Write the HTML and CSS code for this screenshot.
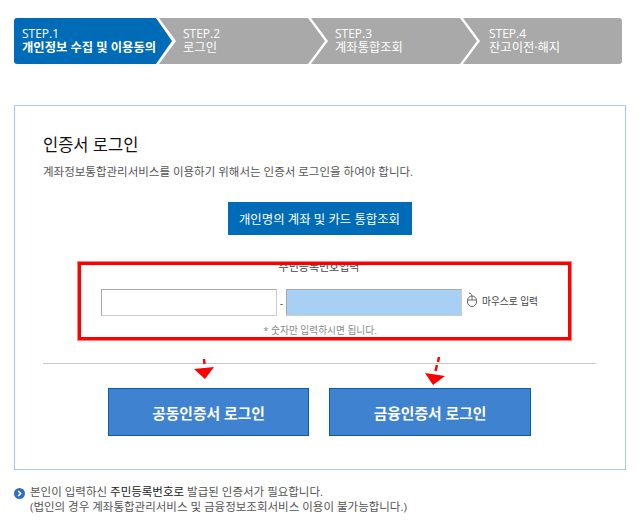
FILE: index.html
```html
<!DOCTYPE html>
<html lang="ko">
<head>
  <meta charset="UTF-8">
  <title>인증서 로그인</title>
  <link rel="stylesheet" href="styles.css">
</head>
<body>

  <ol class="steps">
    <li class="step step-first active"><span class="step-no">STEP.1</span><span class="step-name">개인정보 수집 및 이용동의</span></li>
    <li class="step"><span class="step-no">STEP.2</span><span class="step-name">로그인</span></li>
    <li class="step"><span class="step-no">STEP.3</span><span class="step-name">계좌통합조회</span></li>
    <li class="step step-last"><span class="step-no">STEP.4</span><span class="step-name">잔고이전·해지</span></li>
  </ol>

  <div class="card">
    <h2 class="card-title">인증서 로그인</h2>
    <p class="card-desc">계좌정보통합관리서비스를 이용하기 위해서는 인증서 로그인을 하여야 합니다.</p>

    <div class="lookup-row">
      <button class="lookup-btn">개인명의 계좌 및 카드 통합조회</button>
    </div>

    <div class="id-form">
      <div class="id-label">주민등록번호입력</div>
      <div class="id-row">
        <input type="text" class="id-input">
        <span class="id-dash">-</span>
        <input type="text" class="id-input id-input-on">
        <svg class="mouse-icon" width="12" height="16" viewBox="0 0 12 16">
          <path d="M6 4 C5.5 2 4.5 1 3 1" fill="none" stroke="#666" stroke-width="1"/>
          <rect x="1.5" y="4" width="9" height="10.5" rx="4.5" fill="none" stroke="#666" stroke-width="1"/>
          <path d="M1.5 8 H10.5 M6 4 V8" fill="none" stroke="#666" stroke-width="1"/>
        </svg>
        <span class="mouse-text">마우스로 입력</span>
      </div>
      <div class="id-hint">* 숫자만 입력하시면 됩니다.</div>
    </div>

    <hr class="divider">

    <div class="login-row">
      <button class="login-btn">공동인증서 로그인</button>
      <button class="login-btn">금융인증서 로그인</button>
    </div>

    <!-- red marks drawn on top of the capture -->
    <div class="red-box"></div>
    <svg class="red-arrow arrow-a" width="24" height="24" viewBox="0 0 24 24">
      <path d="M12 0 L12.5 5" stroke="#f00" stroke-width="2.5" fill="none"/>
      <path d="M2 10 L22 8 L13 20 Z" fill="#f00"/>
    </svg>
    <svg class="red-arrow arrow-b" width="24" height="30" viewBox="0 0 24 30">
      <path d="M15 0 L14 5 M13 8 L11.5 14" stroke="#f00" stroke-width="2.5" fill="none"/>
      <path d="M1 16 L21 19 L9 28 Z" fill="#f00"/>
    </svg>
  </div>

  <div class="note">
    <svg class="note-icon" width="11" height="11" viewBox="0 0 11 11">
      <circle cx="5.5" cy="5.5" r="5.5" fill="#2f6fc0"/>
      <path d="M4.2 3 L6.7 5.5 L4.2 8" fill="none" stroke="#fff" stroke-width="1.5"/>
    </svg>
    <p class="note-text">본인이 입력하신 <b>주민등록번호로</b> 발급된 인증서가 필요합니다.<br>(법인의 경우 계좌통합관리서비스 및 금융정보조회서비스 이용이 불가능합니다.)</p>
  </div>

</body>
</html>
```

FILE: styles.css
```css
* {
  box-sizing: border-box;
}

body {
  margin: 0;
  padding: 18px 18px 0 14px;
  width: 644px;
  height: 522px;
  overflow: hidden;
  background: #fff;
  color: #333;
  font-family: "Open Sans", "Noto Sans CJK KR", sans-serif;
  font-size: 11px;
}

/* step bar */
.steps {
  list-style: none;
  margin: 0;
  padding: 0;
  display: flex;
  height: 46px;
}

.step {
  flex: none;
  width: 169px;
  margin-right: -17px;
  padding: 9px 0 0 24px;
  background: #a9a9a9;
  color: #fff;
  font-size: 12px;
  line-height: 14px;
  display: flex;
  flex-direction: column;
  align-items: flex-start;
  clip-path: polygon(0 0, 149px 0, 166px 50%, 149px 100%, 0 100%, 17px 50%);
}

.step-first {
  width: 158px;
  margin-right: -13px;
  padding-left: 8px;
  border-radius: 3px 0 0 3px;
  clip-path: polygon(0 0, 142px 0, 158px 50%, 142px 100%, 0 100%);
}

.step-last {
  width: 159px;
  margin-right: 0;
  padding-left: 26px;
  clip-path: polygon(0 0, 100% 0, 100% 100%, 0 100%, 17px 50%);
  border-radius: 0 3px 3px 0;
}

.step-name {
  font-size: 12.3px;
  white-space: nowrap;
}

.active {
  background: #006cb7;
}

.active .step-name {
  font-weight: 700;
}

/* main card */
.card {
  position: relative;
  margin-top: 41px;
  width: 612px;
  height: 365px;
  padding: 28px 28px 0;
  border: 1px solid #a8cce6;
}

.card-title {
  margin: 0;
  font-size: 16.5px;
  font-weight: 400;
  line-height: 22px;
  color: #111;
}

.card-desc {
  margin: 8px 0 0;
  font-size: 11.5px;
  line-height: 16px;
  color: #555;
}

.lookup-row {
  margin-top: 22px;
  display: flex;
  justify-content: center;
  padding-right: 1px;
}

.lookup-btn {
  width: 184px;
  height: 33px;
  border: 0;
  background: #006cb7;
  color: #fff;
  font-family: inherit;
  font-size: 12.4px;
  font-weight: 400;
}

.id-form {
  margin-top: 25px;
}

.id-label {
  text-align: center;
  font-size: 11px;
  line-height: 14px;
  color: #444;
  padding-right: 2px;
}

.id-row {
  margin-top: 15px;
  padding-left: 58px;
  display: flex;
  align-items: center;
  height: 27px;
}

.id-input {
  width: 176px;
  height: 27px;
  border: 1px solid #ccc;
  border-top-color: #a9a9a9;
  border-left-color: #a9a9a9;
  background: #fff;
}

.id-input-on {
  background: #a8d0f5;
}

.id-dash {
  width: 9px;
  text-align: center;
  color: #555;
}

.mouse-icon {
  margin-left: 4px;
  margin-bottom: 6px;
}

.mouse-text {
  margin-left: 4px;
  margin-bottom: 3px;
  font-size: 9.7px;
  color: #444;
}

.id-hint {
  margin-top: 8px;
  text-align: center;
  font-size: 9.7px;
  line-height: 14px;
  color: #888;
}

.divider {
  margin: 25px 0 0;
  border: 0;
  border-top: 1px solid #c8c8c8;
  width: 553px;
}

.login-row {
  margin-top: 24px;
  padding-left: 65px;
  display: flex;
  gap: 20px;
}

.login-btn {
  width: 201px;
  height: 48px;
  border: 1px solid #0b5ea6;
  background: #3f82d0;
  color: #fff;
  font-family: inherit;
  font-size: 14.8px;
  font-weight: 700;
}

.login-btn + .login-btn {
  width: 202px;
}

/* annotations */
.red-box {
  position: absolute;
  left: 63px;
  top: 156px;
  width: 493px;
  height: 78px;
  border: 3px solid #f00;
  outline: 1px solid #ff8080;
}

.red-arrow {
  position: absolute;
}

.arrow-a {
  left: 177px;
  top: 253px;
}

.arrow-b {
  left: 409px;
  top: 251px;
}

/* footnote */
.note {
  margin-top: 14px;
  display: flex;
  align-items: flex-start;
  gap: 5px;
}

.note-icon {
  margin-top: 4px;
  flex-shrink: 0;
}

.note-text {
  margin: 0;
  font-size: 11.5px;
  line-height: 15px;
  color: #555;
}

.note-text b {
  font-weight: 400;
  color: #222;
}
```
